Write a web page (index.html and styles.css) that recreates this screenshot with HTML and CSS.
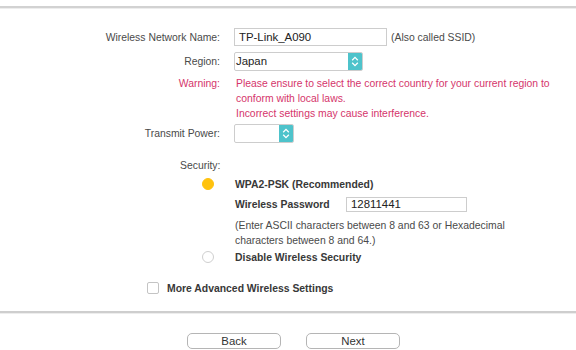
FILE: index.html
```
<!DOCTYPE html>
<html>
<head>
<meta charset="utf-8">
<link rel="stylesheet" href="styles.css">
</head>
<body>
<div class="page">
  <div class="topline"></div>
  <div class="form">
    <div class="row r-name">
      <div class="label">Wireless Network Name:</div>
      <div class="field"><div class="input name-input">TP-Link_A090</div><span class="hint">(Also called SSID)</span></div>
    </div>
    <div class="row r-region">
      <div class="label">Region:</div>
      <div class="field"><div class="select region-select"><span class="sel-text">Japan</span><span class="arrow"><svg width="8" height="11" viewBox="0 0 8 11"><path d="M1.2 4.2 L4 1.4 L6.8 4.2 M1.2 6.8 L4 9.6 L6.8 6.8" fill="none" stroke="#fff" stroke-width="1.3"/></svg></span></div></div>
    </div>
    <div class="row r-warn">
      <div class="label warn">Warning:</div>
      <div class="field warn warn-text">Please ensure to select the correct country for your current region to<br>conform with local laws.<br>Incorrect settings may cause interference.</div>
    </div>
    <div class="row r-power">
      <div class="label">Transmit Power:</div>
      <div class="field"><div class="select power-select"><span class="sel-text"></span><span class="arrow"><svg width="8" height="11" viewBox="0 0 8 11"><path d="M1.2 4.2 L4 1.4 L6.8 4.2 M1.2 6.8 L4 9.6 L6.8 6.8" fill="none" stroke="#fff" stroke-width="1.3"/></svg></span></div></div>
    </div>
    <div class="security-label">Security:</div>
    <div class="opt opt-wpa">
      <span class="radio on"></span><span class="bold">WPA2-PSK (Recommended)</span>
    </div>
    <div class="pw-row">
      <span class="bold pw-label">Wireless Password</span><div class="input pw-input">12811441</div>
    </div>
    <div class="note">(Enter ASCII characters between 8 and 63 or Hexadecimal<br>characters between 8 and 64.)</div>
    <div class="opt opt-dis">
      <span class="radio"></span><span class="bold">Disable Wireless Security</span>
    </div>
    <div class="adv">
      <span class="check"></span><span class="bold">More Advanced Wireless Settings</span>
    </div>
  </div>
  <div class="bottomline"></div>
  <div class="buttons">
    <div class="btn btn-back">Back</div>
    <div class="btn btn-next">Next</div>
  </div>
</div>
</body>
</html>
```
FILE: styles.css
```
html, body { margin: 0; padding: 0; background: #fff; }
body { font-family: "Liberation Sans", Arial, sans-serif; font-size: 10.4px; color: #4a4a4a; width: 576px; height: 350px; overflow: hidden; }
.page { padding-top: 6px; }
.topline { height: 2px; background: #d2d2d2; border-bottom: 1px solid #ededed; }
.form { display: flex; flex-direction: column; }
.row { display: flex; align-items: center; }
.label { width: 220px; text-align: right; flex: none; }
.field { margin-left: 14px; display: flex; align-items: center; }
.r-name { margin-top: 19px; height: 18px; }
.input { border: 1px solid #cdcdcd; box-sizing: border-box; color: #222; font-size: 11.4px; padding-left: 4px; }
.name-input { width: 153px; height: 18px; line-height: 16px; }
.hint { margin-left: 4px; }
.r-region { margin-top: 6px; height: 19px; }
.select { border: 1px solid #cdcdcd; box-sizing: border-box; height: 19px; display: flex; border-radius: 2px; overflow: hidden; }
.sel-text { flex: 1; font-size: 11.4px; line-height: 17px; padding-left: 1px; color: #222; }
.arrow { width: 14px; background: #4ec3cb; display: flex; align-items: center; justify-content: center; }
.region-select { width: 129px; }
.power-select { width: 60px; }
.warn { color: #d5356b; }
.r-warn { margin-top: 5px; align-items: flex-start; line-height: 15px; }
.warn-text { display: block; margin-left: 16px; }
.r-power { margin-top: 3px; height: 19px; }
.security-label { margin-top: 16px; margin-left: 180px; height: 14px; line-height: 14px; }
.opt { display: flex; align-items: center; height: 14px; }
.opt-wpa { margin-top: 4px; }
.radio { width: 12px; height: 12px; border-radius: 50%; box-sizing: border-box; border: 1px solid #cfcfcf; margin-left: 202px; margin-right: 21px; flex: none; }
.radio.on { background: #ffc20e; border-color: #ffc20e; }
.bold { font-weight: bold; color: #383838; }
.pw-row { display: flex; align-items: center; margin-left: 235px; margin-top: 5px; height: 16px; }
.pw-label { width: 111px; flex: none; }
.pw-input { width: 121px; height: 15px; line-height: 13px; }
.note { margin-left: 235px; line-height: 15px; margin-top: 6px; }
.opt-dis { margin-top: 2px; }
.adv { display: flex; align-items: center; margin-left: 147px; height: 14px; margin-top: 17px; }
.check { width: 12px; height: 12px; box-sizing: border-box; border: 1px solid #c4c4c4; border-radius: 2px; margin-right: 8px; flex: none; }
.bottomline { margin-top: 16px; height: 2px; background: #cecece; border-bottom: 1px solid #ededed; }
.buttons { display: flex; padding-left: 187px; margin-top: 19px; }
.btn { width: 94px; height: 16px; box-sizing: border-box; border: 1px solid #b5b5b5; border-radius: 5px; text-align: center; font-size: 11.4px; line-height: 14px; color: #333; }
.btn-next { margin-left: 25px; }
```
